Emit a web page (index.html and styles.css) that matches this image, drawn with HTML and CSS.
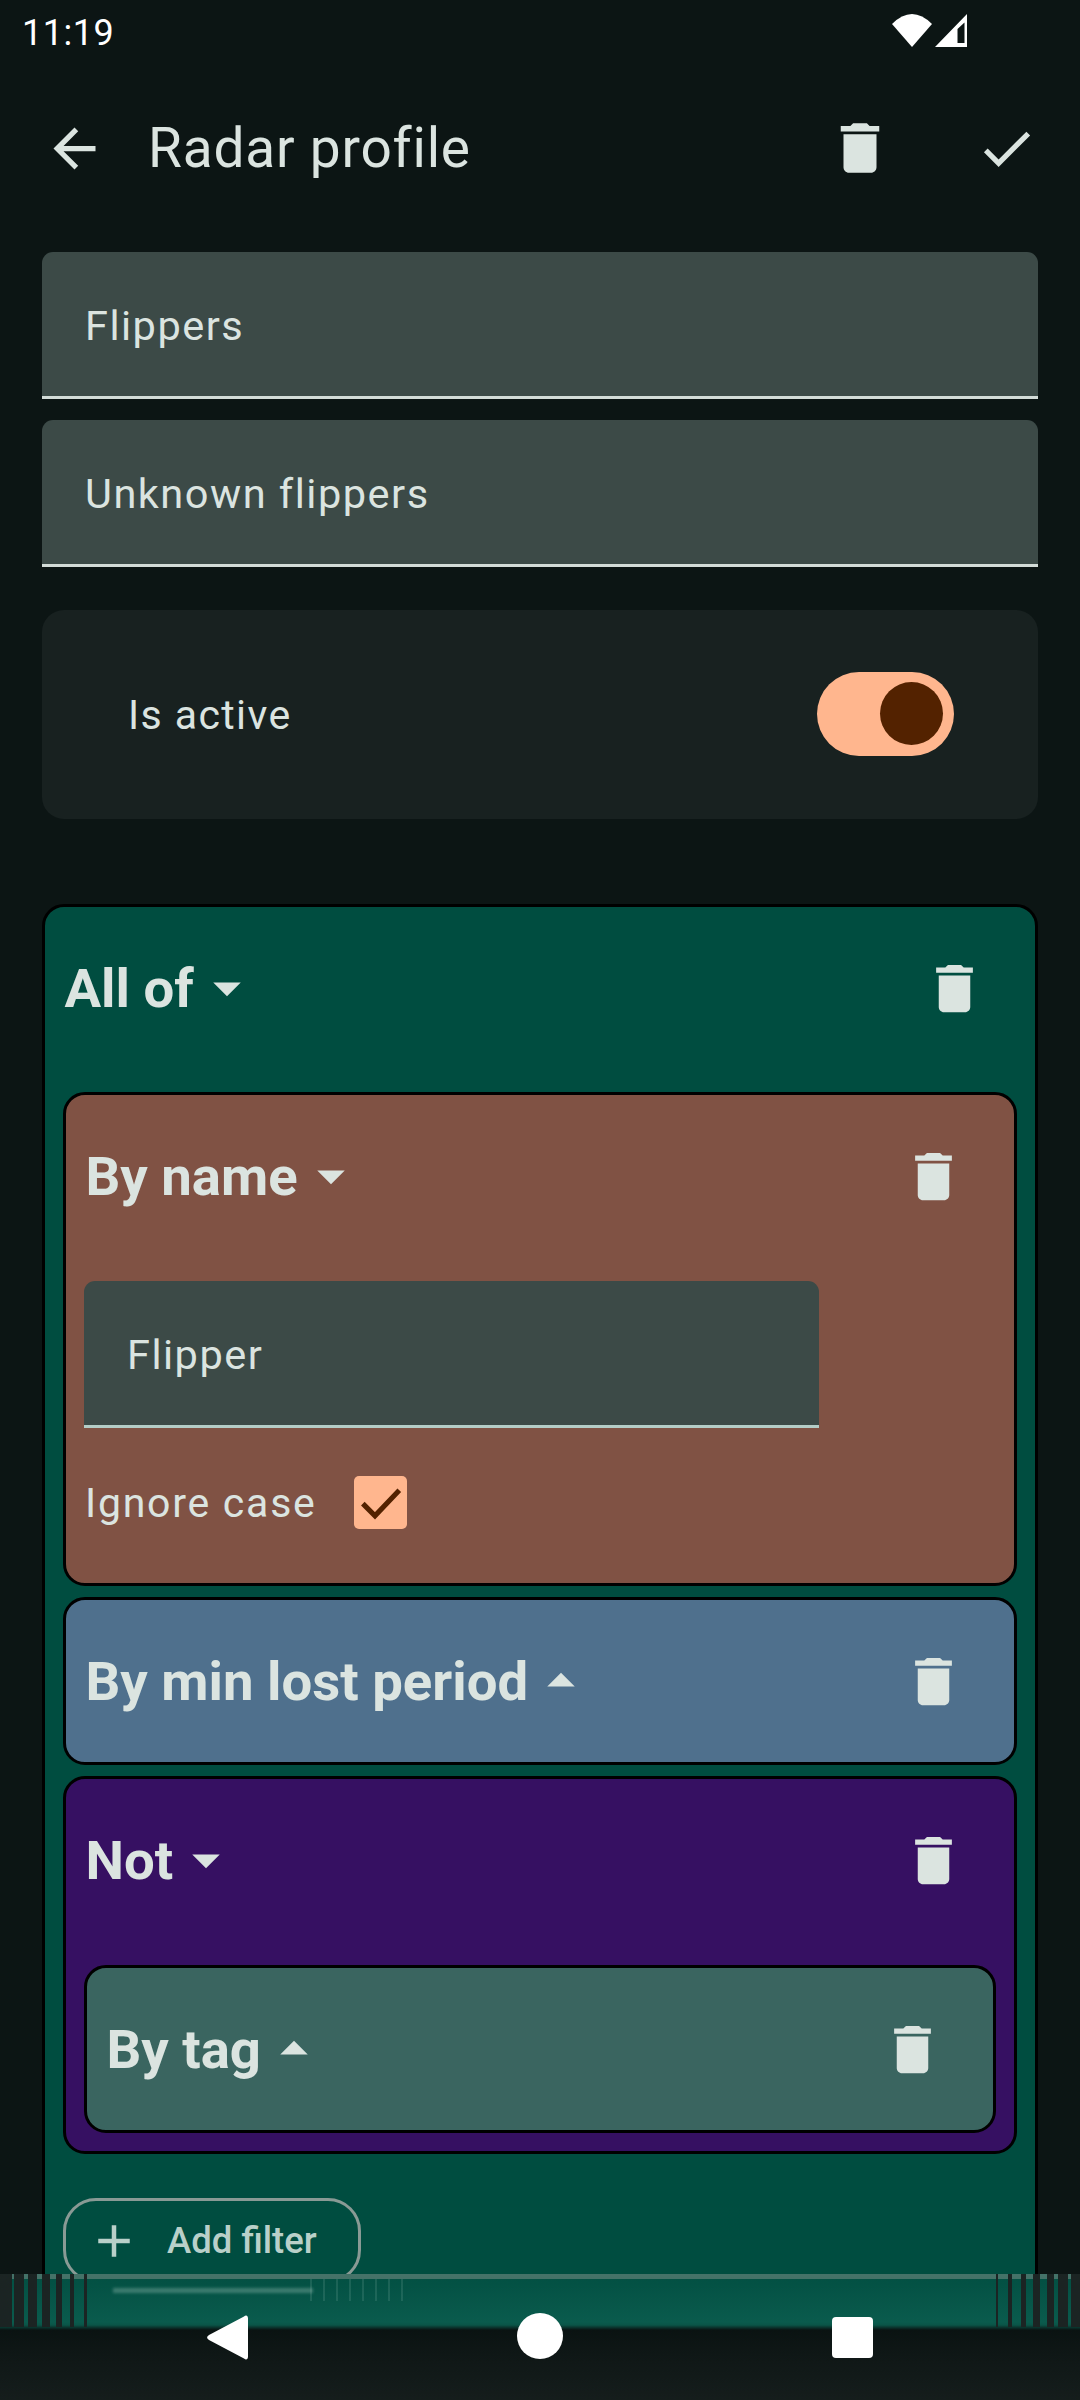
FILE: index.html
```html
<!DOCTYPE html>
<html lang="en">
<head>
<meta charset="utf-8">
<title>Radar profile</title>
<link rel="stylesheet" href="styles.css">
</head>
<body>
<svg class="defs" width="0" height="0">
  <symbol id="trash" viewBox="0 0 24 24"><path d="M6 19c0 1.1.9 2 2 2h8c1.1 0 2-.9 2-2V7H6v12zM19 4h-3.5l-1-1h-5l-1 1H5v2h14V4z"/></symbol>
  <symbol id="down" viewBox="0 0 24 24"><path d="M7 10l5 5 5-5z"/></symbol>
  <symbol id="up" viewBox="0 0 24 24"><path d="M7 14l5-5 5 5z"/></symbol>
</svg>
<div class="screen">
  <div class="status">
    <span class="clock">11:19</span>
    <div class="status-icons">
      <svg class="wifi" viewBox="0 0 40 33"><path d="M20 33 0 10Q20-10 40 10z"/></svg>
      <svg class="signal" viewBox="0 0 32 33"><path fill-rule="evenodd" d="M32 0V33H0zM22.500 15V29H29.500V8.500z"/></svg>
    </div>
  </div>
  <header class="appbar">
    <svg class="icon icon-bar" viewBox="0 0 24 24"><path d="M20 11H7.830l5.590-5.590L12 4l-8 8 8 8 1.410-1.410L7.830 13H20v-2z"/></svg>
    <h1 class="title">Radar profile</h1>
    <svg class="icon-top"><use href="#trash"/></svg>
    <svg class="icon icon-bar icon-check" viewBox="0 0 24 24"><path d="M9 16.170L4.830 12l-1.420 1.410L9 19 21 7l-1.410-1.410z"/></svg>
  </header>
  <main class="content">
    <div class="field">Flippers</div>
    <div class="field">Unknown flippers</div>
    <div class="active-card">
      <span class="body-text">Is active</span>
      <span class="switch"><span class="thumb"></span></span>
    </div>
    <section class="filter filter-teal">
      <div class="row row-tall">
        <span class="heading">All of<svg class="arrow"><use href="#down"/></svg></span>
        <svg class="icon"><use href="#trash"/></svg>
      </div>
      <div class="children">
        <section class="filter filter-brown">
          <div class="row">
            <span class="heading">By name<svg class="arrow"><use href="#down"/></svg></span>
            <svg class="icon"><use href="#trash"/></svg>
          </div>
          <div class="field field-inner">Flipper</div>
          <div class="check-row">
            <span class="body-text body-text-wide">Ignore case</span>
            <span class="checkbox"><svg viewBox="0 0 24 24"><path d="M4 12.500 9.500 18 20.500 6.500"/></svg></span>
          </div>
        </section>
        <section class="filter filter-blue">
          <div class="row">
            <span class="heading">By min lost period<svg class="arrow"><use href="#up"/></svg></span>
            <svg class="icon"><use href="#trash"/></svg>
          </div>
        </section>
        <section class="filter filter-purple">
          <div class="row">
            <span class="heading">Not<svg class="arrow"><use href="#down"/></svg></span>
            <svg class="icon"><use href="#trash"/></svg>
          </div>
          <section class="filter filter-green">
            <div class="row">
              <span class="heading">By tag<svg class="arrow"><use href="#up"/></svg></span>
              <svg class="icon"><use href="#trash"/></svg>
            </div>
          </section>
        </section>
      </div>
      <div class="add-button">
        <svg class="plus" viewBox="0 0 24 24"><path d="M19 13h-6v6h-2v-6H5v-2h6V5h2v6h6v2z"/></svg>
        <span>Add filter</span>
      </div>
    </section>
  </main>
  <nav class="navbar">
    <span class="nav-band"></span>
    <span class="nav-ghost"></span>
    <span class="nav-ghost-end"></span>
    <span class="nav-stripes nav-stripes-left"></span>
    <span class="nav-stripes nav-stripes-right"></span>
    <svg class="nav-back" viewBox="0 0 41 45"><path d="M37 1.500c2-2 4-1 4 2v38c0 3-2 4-4 2L2 25c-2.500-2-2.500-3 0-5z"/></svg>
    <span class="nav-home"></span>
    <span class="nav-recent"></span>
  </nav>
</div>
</body>
</html>
```
FILE: styles.css
```css
* { box-sizing: border-box; }
html, body { margin: 0; padding: 0; }
body { background: #0c1514; font-family: Roboto, sans-serif; color: #dbe4e0; }
.defs { position: absolute; }
.screen { position: relative; width: 1080px; height: 2400px; overflow: hidden; background: #0c1514; }
.status { height: 66px; display: flex; align-items: flex-start; justify-content: space-between; padding: 14px 113px 0 22px; }
.clock { padding-top: 1px; font-size: 36px; line-height: 36px; color: #fff; letter-spacing: .5px; }
.status-icons { display: flex; gap: 3px; margin-top: 0; }
.wifi { width: 40px; height: 33px; fill: #fff; }
.signal { width: 32px; height: 33px; fill: #fff; }
.appbar { height: 164px; display: flex; align-items: center; padding: 0 42px 0 43px; }
.icon { width: 63px; height: 63px; fill: #dbe4e0; flex: none; }
.icon-top { width: 66px; height: 66px; fill: #dbe4e0; flex: none; }
.title { flex: 1; margin: 0 0 0 42px; font-size: 55px; letter-spacing: .8px; font-weight: 400; line-height: 66px; color: #dbe4e0; }
.icon-check { margin-left: 82px; }
.content { padding: 22px 42px 0; }
.field { height: 147px; margin-bottom: 21px; padding: 3px 0 0 43px; display: flex; align-items: center; background: #3c4a47; border-radius: 11px 11px 0 0; border-bottom: 3px solid #d3dcd8; font-size: 41.500px; letter-spacing: 1.500px; }
.active-card { height: 209px; margin-top: 43px; padding: 0 84px 0 86px; display: flex; align-items: center; justify-content: space-between; background: #182120; border-radius: 22px; }
.body-text { font-size: 41px; letter-spacing: 1.400px; }
.body-text-wide { letter-spacing: 1.750px; }
.switch { width: 137px; height: 84px; margin-bottom: 2px; padding-right: 11px; display: flex; align-items: center; justify-content: flex-end; background: #ffb68e; border-radius: 42px; }
.thumb { width: 63px; height: 63px; border-radius: 50%; background: #532200; }
.filter { border: 3px solid #000; border-radius: 22px; padding: 0 18px; }
.filter-teal { margin-top: 85px; height: 1600px; background: #004d40; }
.filter-brown { background: #805244; height: 494px; }
.filter-blue { background: #4f708d; }
.filter-purple { background: #361062; padding-bottom: 18px; }
.filter-green { background: #3a6560; }
.row { height: 162px; display: flex; align-items: center; justify-content: space-between; padding-right: 31.500px; }
.row-tall { margin-bottom: 23px; }
.filter-brown .row, .filter-purple > .row { margin-bottom: 24px; }
.heading { display: flex; align-items: center; padding-left: 1.500px; font-size: 54.500px; font-weight: 700; line-height: 66px; color: #dbe4e0; }
.arrow { width: 66px; height: 66px; fill: #dbe4e0; flex: none; }
.children { display: flex; flex-direction: column; gap: 11px; }
.field-inner { width: 735px; margin-bottom: 0; border-bottom-color: #b4cdc7; }
.check-row { display: flex; align-items: center; gap: 37px; padding: 48px 0 0 1px; }
.checkbox { width: 53px; height: 53px; background: #ffb68e; border-radius: 5px; display: block; }
.checkbox svg { display: block; width: 53px; height: 53px; fill: none; stroke: #532200; stroke-width: 2.300; }
.add-button { margin-top: 44px; width: 298px; height: 85px; display: flex; align-items: center; gap: 26px; padding-left: 21px; border: 3px solid #899a95; border-radius: 33px; font-size: 36.500px; font-weight: 500; color: #b9d0c9; }
.plus { width: 54px; height: 54px; fill: #b9d0c9; flex: none; }
.navbar { position: absolute; left: 0; right: 0; bottom: 0; height: 126px; background: linear-gradient(#024f42 0, #0a5b4d 48px, #0a5548 51px, #0a1312 56px, #0f1716 80px, #151d1c 126px); }
.nav-band { position: absolute; left: 0; right: 0; top: 0; height: 5px; background: #447268; }
.nav-stripes { position: absolute; top: 0; height: 53px; }
.nav-stripes-left { left: 0; width: 100px; background: linear-gradient(90deg, #1b2423 0 12px, transparent 12px 14px, #1b2423 14px 24px, transparent 24px 28px, #1b2423 28px 37px, transparent 37px 42px, #1b2423 42px 50px, transparent 50px 56px, #1b2423 56px 62px, transparent 62px 70px, #1b2423 70px 74px, transparent 74px 84px, #1b2423 84px 87px, transparent 87px 100px); }
.nav-stripes-right { right: 0; width: 84px; background: linear-gradient(90deg, #1b2423 0 2px, transparent 2px 12px, #1b2423 12px 16px, transparent 16px 25px, #1b2423 25px 30px, transparent 30px 37px, #1b2423 37px 44px, transparent 44px 51px, #1b2423 51px 58px, transparent 58px 62px, #1b2423 62px 72px, transparent 72px 75px, #1b2423 75px 84px); }
.nav-ghost { position: absolute; left: 113px; top: 14px; width: 200px; height: 5px; background: rgba(190,220,210,.3); filter: blur(1.500px); }
.nav-ghost-end { position: absolute; left: 310px; top: 5px; width: 97px; height: 22px; background: repeating-linear-gradient(90deg, rgba(190,220,210,.13) 0 1.500px, transparent 1.500px 13px); }
.nav-back { position: absolute; left: 207px; top: 41px; width: 41px; height: 45px; fill: #fff; }
.nav-home { position: absolute; left: 517px; top: 39px; width: 46px; height: 46px; border-radius: 50%; background: #fff; }
.nav-recent { position: absolute; left: 832px; top: 43px; width: 41px; height: 41px; border-radius: 4px; background: #fff; }
```
